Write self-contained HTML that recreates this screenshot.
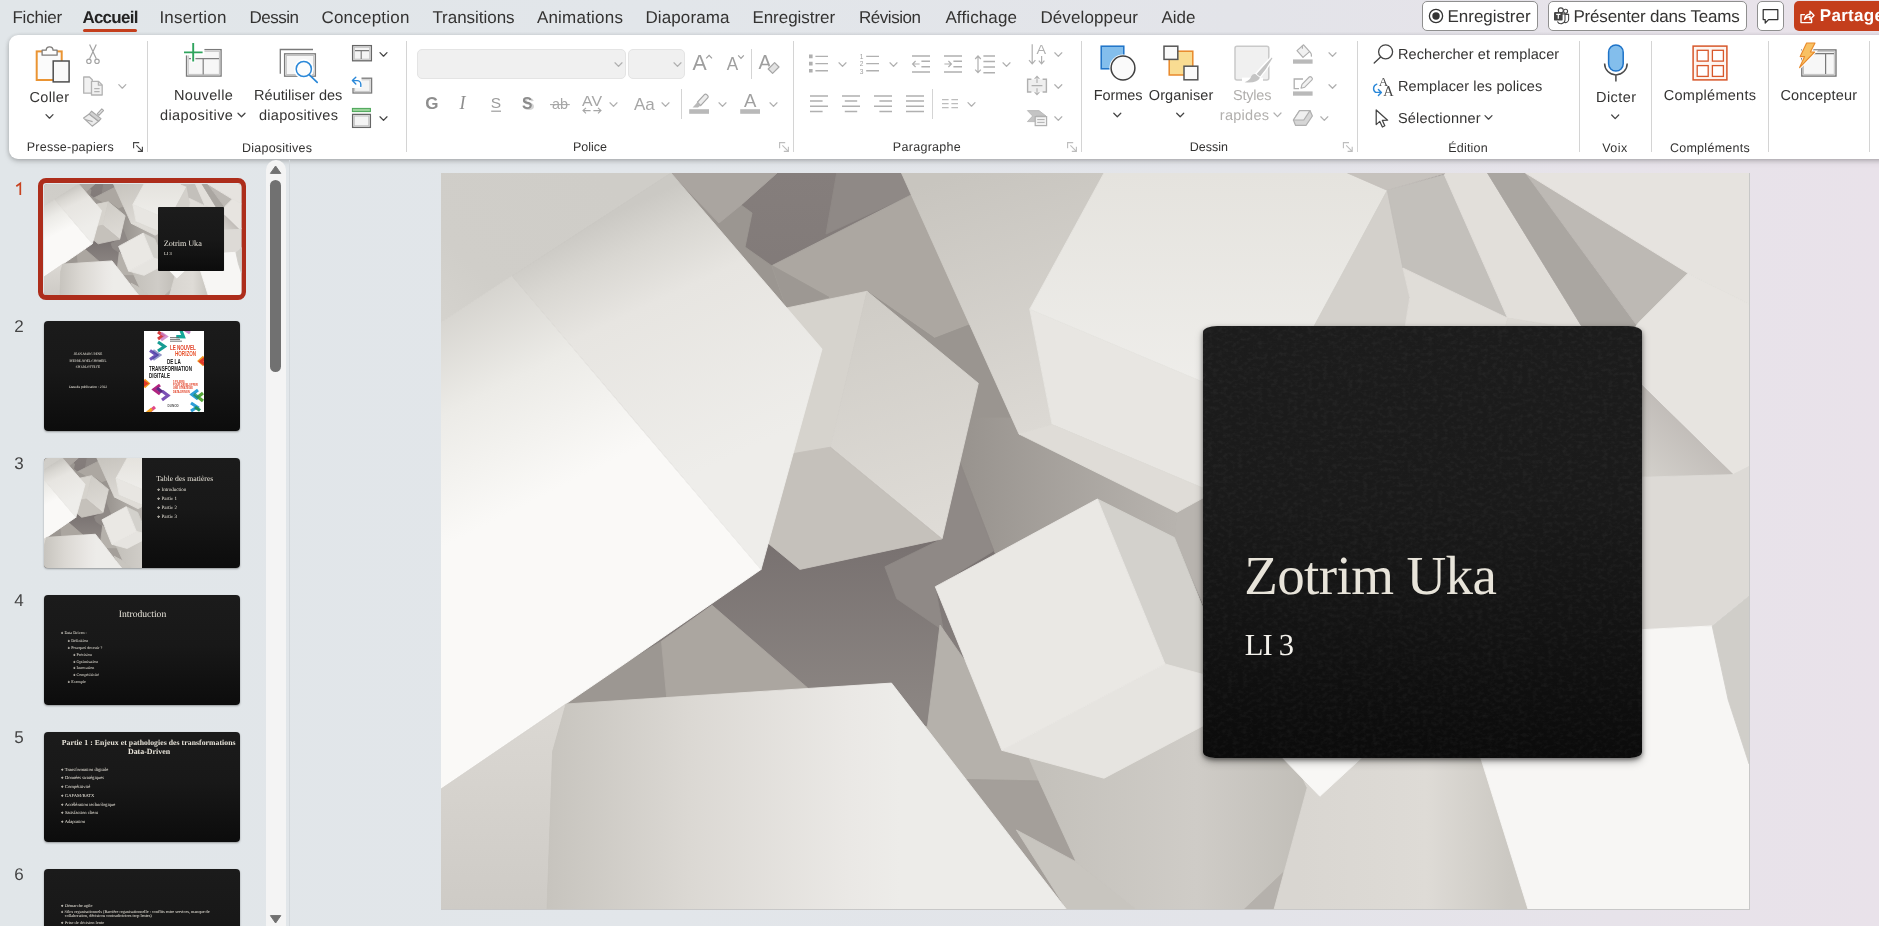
<!DOCTYPE html>
<html lang="fr"><head><meta charset="utf-8"><title>PowerPoint</title>
<style>
html,body{margin:0;padding:0}
body{width:1879px;height:926px;overflow:hidden;position:relative;font-family:"Liberation Sans",sans-serif;
background:linear-gradient(90deg,#e1e6e9 0%,#e2e6ea 35%,#e3e4e9 66%,#e7e3ea 86%,#e9e2ea 100%)}
.t{position:absolute;white-space:pre;text-rendering:geometricPrecision;font-family:"Liberation Sans",sans-serif}
.sf{font-family:"Liberation Serif",serif}
#ribbon{position:absolute;left:9px;top:35px;width:1890px;height:124px;background:#fff;border-radius:9px;box-shadow:0 1px 4px rgba(0,0,0,.22),0 3px 6px rgba(0,0,0,.10)}
.tabline{position:absolute;left:83px;top:29px;width:54px;height:3px;border-radius:2px;background:#c43e1c}
.btn{position:absolute;top:1px;height:30px;box-sizing:border-box;border:1px solid #8f8f8f;border-radius:5px;background:#fff}
#share{position:absolute;left:1794px;top:1px;width:100px;height:30px;border-radius:5px;background:#c43e1c}
.sep{position:absolute;top:41px;width:1px;height:111px;background:#d4d4d4}
.ssep{position:absolute;width:1px;background:#d4d4d4}
.combo{position:absolute;top:49px;height:30px;box-sizing:border-box;background:#f0f0f0;border:1px solid #e4e4e4;border-radius:5px}
#ov{position:absolute;left:0;top:0}
#labels{position:absolute;left:0;top:0;width:1879px;height:926px;will-change:transform}
.th{will-change:transform}
#track{position:absolute;left:266px;top:160px;width:20px;height:780px;background:#f4f4f4;border-radius:10px 10px 0 0}
#thumb{position:absolute;left:270px;top:180px;width:11px;height:192px;background:#717171;border-radius:6px}
#divider{position:absolute;left:289px;top:160px;width:1px;height:770px;background:#d3d8dc}
#slide{position:absolute;left:441px;top:173px;width:1309px;height:737px;background:#c8c8c8}
#card{overflow:hidden;position:absolute;left:1203px;top:326px;width:439px;height:432px;border-radius:14px 14px 12px 12px / 6px 6px 6px 6px;
background:linear-gradient(180deg,#1c1c1c 0%,#1a1a1a 40%,#131313 70%,#0b0b0b 100%);box-shadow:0 2px 4px rgba(0,0,0,.45),0 4px 9px rgba(0,0,0,.25)}
.th{position:absolute;left:44px;width:196px;height:110px;border-radius:4px;overflow:hidden;box-shadow:0 1px 2px rgba(0,0,0,.35)}
.thd{background:linear-gradient(180deg,#1b1b1b 0%,#181818 45%,#0c0c0c 100%)}
.tt{position:absolute;white-space:pre;text-rendering:geometricPrecision;font-family:"Liberation Serif",serif;color:#e8e4da;line-height:1}
#sel{position:absolute;left:38px;top:178px;width:208px;height:122px;box-sizing:border-box;border:5px solid #ad2d1b;border-radius:8px}
</style></head>
<body>
<!-- tab strip -->
<div class="tabline"></div>
<div class="btn" style="left:1422px;width:116px"></div>
<div class="btn" style="left:1548px;width:199px"></div>
<div class="btn" style="left:1757px;width:27px"></div>
<div id="share"></div>
<!-- ribbon -->
<div id="ribbon"></div>
<div class="sep" style="left:147px"></div>
<div class="sep" style="left:406px"></div>
<div class="sep" style="left:793px"></div>
<div class="sep" style="left:1081px"></div>
<div class="sep" style="left:1357px"></div>
<div class="sep" style="left:1579px"></div>
<div class="sep" style="left:1651px"></div>
<div class="sep" style="left:1768px"></div>
<div class="sep" style="left:1869px"></div>
<div class="ssep" style="left:751px;top:49px;height:30px"></div>
<div class="ssep" style="left:681px;top:89px;height:30px"></div>
<div class="ssep" style="left:932px;top:89px;height:30px"></div>
<div class="combo" style="left:417px;width:209px"></div>
<div class="combo" style="left:628px;width:57px"></div>
<!-- slide panel -->
<div id="track"></div><div id="thumb"></div><div id="divider"></div>
<div id="sel"></div>
<div class="th" style="top:183.5px;left:43.5px;width:197.5px;height:111px;border-radius:4px;box-shadow:none"><svg width="197.5" height="111" viewBox="441 173 1308 736" preserveAspectRatio="none" style="position:absolute;left:0px;top:0px;display:block"><use href="#cubes" x="441" y="173" width="1308" height="736"/></svg><div style="position:absolute;left:114px;top:22.6px;width:66px;height:64.8px;border-radius:1px;background:linear-gradient(180deg,#1c1c1c,#181818 50%,#0c0c0c)"></div><span class="tt" style="left:119.8px;top:56.3px;font-size:8.2px;letter-spacing:-.05px">Zotrim Uka</span><span class="tt" style="left:120.0px;top:68.0px;font-size:4.6px">LI 3</span></div>
<div class="th thd" style="top:321px"><div style="position:absolute;left:100px;top:10px;width:59.5px;height:81px;background:#fff;overflow:hidden">
<svg width="60" height="81" viewBox="0 0 60 81" style="position:absolute;left:0;top:0">
<g fill="none" stroke-width="3.2" stroke-linejoin="miter">
<path d="M14,1 l5,3.5 l-5,3.5" stroke="#d63b3b"/><path d="M17,2 l5,3.5 l-5,3.5" stroke="#c77bc5" opacity=".8"/>
<path d="M34,0 l6,4 l-6,4" stroke="#16a79a" transform="rotate(35 37 4)"/><path d="M41,-1 l5,3" stroke="#c487c8"/>
<path d="M14,11 l6.5,4.5 l-6.5,4.5" stroke="#169c93"/><path d="M6,19.5 l6.5,4.5 l-6.5,4.5" stroke="#6e55b8"/><path d="M9,19.5 l6.5,4.5 l-6.5,4.5" stroke="#3b3f9a" opacity=".55"/>
<path d="M60,26 l-4.5,4 l4.5,4" stroke="#f29a1f"/><path d="M61,27.5 l-4,3 l4,3" stroke="#e03a2a"/>
<path d="M0,49 l4,3.5 l-4,3.5" stroke="#f29a1f"/><path d="M-1,50.5 l3,2 l-3,2" stroke="#e03a2a"/>
<path d="M16,54 l-6,4.5 l6,4.5" stroke="#b0257f"/><path d="M18,60 l6,4.5 l-6,4.5" stroke="#7b52b5"/><path d="M13,57 l5,4" stroke="#5b2a86"/>
<path d="M54,59 l-6,4.5 l6,4.5" stroke="#2f9fd8"/><path d="M59,62 l-5,4 l5,4" stroke="#57a83a"/><path d="M50,63 l5,4" stroke="#1b8a6b" opacity=".8"/>
<path d="M47,72 l6,4 l-6,4" stroke="#2f9fd8"/><path d="M51,76 l5,3.5" stroke="#1e8f5e"/>
<path d="M6,80 l5,-4" stroke="#e04a8a"/><path d="M3,82 l5,-4" stroke="#f2a11f"/>
</g>
<path d="M26,6.6 h9 M26,8.4 h10 M26,10.2 h12" stroke="#666" stroke-width=".9"/>
</svg>
<span style="position:absolute;left:25.5px;top:12.6px;font:700 7.4px/7px 'Liberation Sans',sans-serif;color:#e2452c;white-space:pre;transform:scaleX(.62);transform-origin:0 0;letter-spacing:-.1px">LE NOUVEL</span>
<span style="position:absolute;left:30.5px;top:19.4px;font:700 7.4px/7px 'Liberation Sans',sans-serif;color:#e8552f;white-space:pre;transform:scaleX(.62);transform-origin:0 0">HORIZON</span>
<span style="position:absolute;left:22.6px;top:27.4px;font:700 7.6px/7px 'Liberation Sans',sans-serif;color:#161616;white-space:pre;transform:scaleX(.6);transform-origin:0 0">DE LA</span>
<span style="position:absolute;left:4.8px;top:34.2px;font:700 7.6px/7px 'Liberation Sans',sans-serif;color:#161616;white-space:pre;transform:scaleX(.6);transform-origin:0 0">TRANSFORMATION</span>
<span style="position:absolute;left:4.8px;top:41.2px;font:700 7.6px/7px 'Liberation Sans',sans-serif;color:#161616;white-space:pre;transform:scaleX(.6);transform-origin:0 0">DIGITALE</span>
<span style="position:absolute;left:29px;top:49.6px;font:700 3.1px/3.4px 'Liberation Sans',sans-serif;color:#e2452c;white-space:pre;transform:scaleX(.8);transform-origin:0 0">5 PILIERS<br>POUR DÉVELOPPER<br>UNE STRATÉGIE<br>DATA-DRIVEN</span>
<span style="position:absolute;left:23.4px;top:74.4px;font:700 3px/3px 'Liberation Sans',sans-serif;color:#555;white-space:pre;letter-spacing:.1px">DUNOD</span>
</div><span class="tt" style="left:14.0px;top:31.8px;font-size:3.3px;width:60px;text-align:center;color:#f4f0e6">JEAN-MARC RENE</span><span class="tt" style="left:14.0px;top:38.8px;font-size:3.3px;width:60px;text-align:center;color:#f4f0e6">PIERRE-NOËL CHOMEIL</span><span class="tt" style="left:14.0px;top:45.0px;font-size:3.3px;width:60px;text-align:center;color:#f4f0e6">CHARLOTTE FÉ</span><span class="tt" style="left:14.0px;top:65.0px;font-size:3.6px;width:60px;text-align:center;color:#f4f0e6">Date de publication : 2022</span></div>
<div class="th thd" style="top:458px"><svg width="98" height="110" viewBox="548 173 655 736" preserveAspectRatio="none" style="position:absolute;left:0px;top:0px;display:block"><use href="#cubes" x="441" y="173" width="1308" height="736"/></svg><span class="tt" style="left:112.2px;top:16.7px;font-size:7.7px">Table des matières</span><span class="tt" style="left:113.0px;top:29.6px;font-size:5.0px"><span style="font-size:.72em">❖</span> Introduction</span><span class="tt" style="left:113.0px;top:38.6px;font-size:5.0px"><span style="font-size:.72em">❖</span> Partie 1</span><span class="tt" style="left:113.0px;top:47.6px;font-size:5.0px"><span style="font-size:.72em">❖</span> Partie 2</span><span class="tt" style="left:113.0px;top:56.6px;font-size:5.0px"><span style="font-size:.72em">❖</span> Partie 3</span></div>
<div class="th thd" style="top:595px"><span class="tt" style="left:0.0px;top:14.8px;font-size:9.6px;width:197px;text-align:center">Introduction</span><span class="tt" style="left:16.8px;top:36.2px;font-size:4.1px"><span style="font-size:.72em">❖</span> Data Driven :</span><span class="tt" style="left:23.5px;top:44.1px;font-size:4.1px"><span style="font-size:.72em">❖</span> Définition</span><span class="tt" style="left:23.5px;top:50.7px;font-size:4.1px"><span style="font-size:.72em">❖</span> Pourquoi devenir ?</span><span class="tt" style="left:28.9px;top:57.9px;font-size:4.1px"><span style="font-size:.72em">❖</span> Précision</span><span class="tt" style="left:28.9px;top:65.0px;font-size:4.1px"><span style="font-size:.72em">❖</span> Optimisation</span><span class="tt" style="left:28.9px;top:71.2px;font-size:4.1px"><span style="font-size:.72em">❖</span> Innovation</span><span class="tt" style="left:28.9px;top:78.3px;font-size:4.1px"><span style="font-size:.72em">❖</span> Compétitivité</span><span class="tt" style="left:23.5px;top:85.0px;font-size:4.1px"><span style="font-size:.72em">❖</span> Exemple</span></div>
<div class="th thd" style="top:732px"><span class="tt" style="left:17.8px;top:6.7px;font-size:7.7px;font-weight:700;letter-spacing:.07px">Partie 1 : Enjeux et pathologies des transformations</span><span class="tt" style="left:0.0px;top:16.2px;font-size:7.9px;width:210px;text-align:center;font-weight:700">Data-Driven</span><span class="tt" style="left:16.8px;top:36.0px;font-size:4.6px"><span style="font-size:.72em">❖</span> Transformation digitale</span><span class="tt" style="left:16.8px;top:44.3px;font-size:4.6px"><span style="font-size:.72em">❖</span> Données stratégiques</span><span class="tt" style="left:16.8px;top:53.2px;font-size:4.6px"><span style="font-size:.72em">❖</span> Compétitivité</span><span class="tt" style="left:16.8px;top:62.0px;font-size:4.6px"><span style="font-size:.72em">❖</span> GAFAM/BATX</span><span class="tt" style="left:16.8px;top:70.8px;font-size:4.6px"><span style="font-size:.72em">❖</span> Accélération technologique</span><span class="tt" style="left:16.8px;top:79.1px;font-size:4.6px"><span style="font-size:.72em">❖</span> Satisfaction client</span><span class="tt" style="left:16.8px;top:87.8px;font-size:4.6px"><span style="font-size:.72em">❖</span> Adaptation</span></div>
<div class="th thd" style="top:869px"><span class="tt" style="left:16.8px;top:34.5px;font-size:4.4px"><span style="font-size:.72em">❖</span> Démarche agile</span><span class="tt" style="left:16.8px;top:41.2px;font-size:4.25px"><span style="font-size:.72em">❖</span> Silos organisationnels (Barrière organisationnelle : conflits entre services, manque de</span><span class="tt" style="left:20.8px;top:45.2px;font-size:4.25px">collaboration, décisions contradictoires trop lentes)</span><span class="tt" style="left:16.8px;top:51.9px;font-size:4.4px"><span style="font-size:.72em">❖</span> Prise de décision lente</span></div>
<!-- main slide -->
<div id="slide"><svg width="1308" height="736" viewBox="441 173 1308 736" style="position:absolute;left:0;top:0;display:block"><use href="#cubes" x="441" y="173" width="1308" height="736"/></svg></div>
<div id="card"><svg width="439" height="432" style="position:absolute;left:0;top:0;border-radius:14px 14px 12px 12px / 6px 6px 6px 6px"><filter id="lth" x="0" y="0" width="100%" height="100%"><feTurbulence type="fractalNoise" baseFrequency=".2 .26" numOctaves="3" seed="11"/><feColorMatrix type="matrix" values="0 0 0 0 1  0 0 0 0 1  0 0 0 0 1  1.6 0 0 0 -.62"/></filter><rect width="439" height="432" filter="url(#lth)" opacity=".05"/></svg></div>
<!-- icons overlay -->
<svg id="ov" width="1879" height="926" viewBox="0 0 1879 926" fill="none">
<symbol id="cubes" viewBox="441 173 1308 736" preserveAspectRatio="none">
<defs>
<linearGradient id="gBase" gradientUnits="userSpaceOnUse" x1="0" y1="173" x2="0" y2="909"><stop offset="0" stop-color="#857e7c"/><stop offset=".5" stop-color="#787170"/><stop offset=".72" stop-color="#8b8582"/><stop offset="1" stop-color="#8b8582"/></linearGradient>
<linearGradient id="gLeft" gradientUnits="userSpaceOnUse" x1="478" y1="290" x2="575" y2="480"><stop offset="0" stop-color="#d5d3ce"/><stop offset=".45" stop-color="#ecebe7"/><stop offset="1" stop-color="#faf9f7"/></linearGradient>
<linearGradient id="gTop" gradientUnits="userSpaceOnUse" x1="590" y1="225" x2="705" y2="470"><stop offset="0" stop-color="#cbc9c4"/><stop offset=".15" stop-color="#d9d7d2"/><stop offset=".36" stop-color="#e7e5e1"/><stop offset="1" stop-color="#eeedea"/></linearGradient>
<linearGradient id="gTL" gradientUnits="userSpaceOnUse" x1="600" y1="173" x2="441" y2="330"><stop offset="0" stop-color="#cfcdc8"/><stop offset=".7" stop-color="#d0cec9"/><stop offset="1" stop-color="#d5d3ce"/></linearGradient>
<linearGradient id="gMidR" gradientUnits="userSpaceOnUse" x1="867" y1="291" x2="942" y2="539"><stop offset="0" stop-color="#cfccc6"/><stop offset="1" stop-color="#dfdcd7"/></linearGradient>
<linearGradient id="gRL" gradientUnits="userSpaceOnUse" x1="960" y1="173" x2="1040" y2="430"><stop offset="0" stop-color="#c8c5bf"/><stop offset="1" stop-color="#dcd9d4"/></linearGradient>
<linearGradient id="gRF" gradientUnits="userSpaceOnUse" x1="1150" y1="173" x2="1150" y2="400"><stop offset="0" stop-color="#e5e3de"/><stop offset="1" stop-color="#efeeeb"/></linearGradient>
<linearGradient id="gBot" gradientUnits="userSpaceOnUse" x1="548" y1="0" x2="900" y2="0"><stop offset="0" stop-color="#c7c4be"/><stop offset=".4" stop-color="#dbd8d3"/><stop offset=".85" stop-color="#eae8e5"/><stop offset="1" stop-color="#edece9"/></linearGradient>
<linearGradient id="gBotL" gradientUnits="userSpaceOnUse" x1="0" y1="720" x2="0" y2="910"><stop offset="0" stop-color="#dad7d2"/><stop offset="1" stop-color="#cecbc6"/></linearGradient>
<linearGradient id="gK1" gradientUnits="userSpaceOnUse" x1="960" y1="0" x2="1180" y2="0"><stop offset="0" stop-color="#98938e"/><stop offset="1" stop-color="#b8b4af"/></linearGradient>
<linearGradient id="gG5" gradientUnits="userSpaceOnUse" x1="1040" y1="0" x2="1300" y2="0"><stop offset="0" stop-color="#c4c1bb"/><stop offset=".6" stop-color="#cfccc7"/><stop offset="1" stop-color="#c2bfb9"/></linearGradient>
<linearGradient id="gG6" gradientUnits="userSpaceOnUse" x1="1300" y1="0" x2="1510" y2="0"><stop offset="0" stop-color="#d9d6d1"/><stop offset=".6" stop-color="#dedbd6"/><stop offset="1" stop-color="#cbc8c2"/></linearGradient>
<linearGradient id="gH2" gradientUnits="userSpaceOnUse" x1="1700" y1="420" x2="1650" y2="475"><stop offset="0" stop-color="#beb9b5"/><stop offset="1" stop-color="#d2cfca"/></linearGradient>
</defs>
<rect x="441" y="173" width="1308" height="736" fill="url(#gBase)"/>
<!-- top dark facets -->
<polygon vector-effect="non-scaling-stroke" points="671,173 777,173 741,205 752,213 745,247 772,266 787.5,308 822,349" stroke="#9b9691" stroke-width=".9" stroke-linejoin="round" fill="#9b9691"/>
<polygon vector-effect="non-scaling-stroke" points="671,173 777,173 741,205 719,223" stroke="#aaa5a0" stroke-width=".9" stroke-linejoin="round" fill="#aaa5a0"/>
<polygon vector-effect="non-scaling-stroke" points="836.7,173 904,173 914,193.5 826,234" stroke="#8f8986" stroke-width=".9" stroke-linejoin="round" fill="#8f8986"/>
<!-- pyramid cube -->
<polygon vector-effect="non-scaling-stroke" points="772,265.6 914,193.5 973,323.5 934.6,338.3 867,291.3 786.5,308" stroke="#aca7a1" stroke-width=".9" stroke-linejoin="round" fill="#aca7a1"/>
<polygon vector-effect="non-scaling-stroke" points="772,265.6 829,297.3 786.5,308" stroke="#9d9893" stroke-width=".9" stroke-linejoin="round" fill="#9d9893"/>
<polygon vector-effect="non-scaling-stroke" points="867,291.3 934.6,338.3 973,323.5 1013,418 969.9,418 978.3,383.3" stroke="#9a9590" stroke-width=".9" stroke-linejoin="round" fill="#9a9590"/>
<!-- K regions -->
<polygon vector-effect="non-scaling-stroke" points="969.9,418 1013,418 1022,432 1177,512.3 1174.4,537.6 1100,506 997,558 959.3,460.5" stroke="url(#gK1)" stroke-width=".9" stroke-linejoin="round" fill="url(#gK1)"/>
<polygon vector-effect="non-scaling-stroke" points="942,538.9 969.9,418 959.3,460.5 993.8,550.8 935.3,586.7 943.3,630.5 896.8,598.7 884.9,566.8" stroke="#8f8986" stroke-width=".9" stroke-linejoin="round" fill="#8f8986"/>
<polygon vector-effect="non-scaling-stroke" points="1177,512.3 1203,498 1203,604 1174.4,537.6" stroke="#b8b4af" stroke-width=".9" stroke-linejoin="round" fill="#b8b4af"/>
<!-- middle cube -->
<polygon vector-effect="non-scaling-stroke" points="786.5,308 867,291.3 830.4,447.2 785,462" stroke="#d6d3cd" stroke-width=".9" stroke-linejoin="round" fill="#d6d3cd"/>
<polygon vector-effect="non-scaling-stroke" points="867,291.3 978.3,383.3 942,538.9 830.4,447.2" stroke="url(#gMidR)" stroke-width=".9" stroke-linejoin="round" fill="url(#gMidR)"/>
<polygon vector-effect="non-scaling-stroke" points="830.4,447.2 942,538.9 799.9,569.4 757,534 785,455" stroke="#c5c1bb" stroke-width=".9" stroke-linejoin="round" fill="#c5c1bb"/>
<!-- lower-left dark facets -->
<polygon vector-effect="non-scaling-stroke" points="624.3,664 661.5,641.2 666.8,698.5 566,704" stroke="#9c9792" stroke-width=".9" stroke-linejoin="round" fill="#9c9792"/>
<polygon vector-effect="non-scaling-stroke" points="661.5,641.2 712,605.3 807.6,687.9 666.8,698.5" stroke="#aba6a0" stroke-width=".9" stroke-linejoin="round" fill="#aba6a0"/>
<!-- big cube -->
<polygon vector-effect="non-scaling-stroke" points="441,173 671,173 512,276 441,322.5" stroke="url(#gTL)" stroke-width=".9" stroke-linejoin="round" fill="url(#gTL)"/>
<polygon vector-effect="non-scaling-stroke" points="441,322.5 512,276 632,418 761,569.5 624.3,664 441,789" stroke="url(#gLeft)" stroke-width=".9" stroke-linejoin="round" fill="url(#gLeft)"/>
<polygon vector-effect="non-scaling-stroke" points="671,173 822,349 761,569.5 512,276" stroke="url(#gTop)" stroke-width=".9" stroke-linejoin="round" fill="url(#gTop)"/>
<!-- right cube -->
<polygon vector-effect="non-scaling-stroke" points="901.5,173 1104,173 1029.8,309.2 1052.2,424.6 1019,434" stroke="url(#gRL)" stroke-width=".9" stroke-linejoin="round" fill="url(#gRL)"/>
<polygon vector-effect="non-scaling-stroke" points="1104,173 1347.6,173 1387.3,190.3 1300,353 1210,385 1029.8,309.2" stroke="url(#gRF)" stroke-width=".9" stroke-linejoin="round" fill="url(#gRF)"/>
<polygon vector-effect="non-scaling-stroke" points="1029.8,309.2 1210,385 1210,491 1052.2,424.6" stroke="#e8e6e2" stroke-width=".9" stroke-linejoin="round" fill="#e8e6e2"/>
<polygon vector-effect="non-scaling-stroke" points="1052.2,424.6 1210,491 1203,498 1177,512.3 1019,434" stroke="#dfdcd7" stroke-width=".9" stroke-linejoin="round" fill="#dfdcd7"/>
<!-- top right facets -->
<polygon vector-effect="non-scaling-stroke" points="1347.6,173 1446,173 1387.3,190.3" stroke="#c6c2bd" stroke-width=".9" stroke-linejoin="round" fill="#c6c2bd"/>
<polygon vector-effect="non-scaling-stroke" points="1387.3,190.3 1402.9,268 1409.8,297.4 1404.6,330 1312,330" stroke="#d3d0cb" stroke-width=".9" stroke-linejoin="round" fill="#d3d0cb"/>
<polygon vector-effect="non-scaling-stroke" points="1387.3,190.3 1444.3,174.7 1507.6,318.1 1402.9,268" stroke="#c3c0bb" stroke-width=".9" stroke-linejoin="round" fill="#c3c0bb"/>
<polygon vector-effect="non-scaling-stroke" points="1402.9,268 1507.6,318.1 1505,330 1404.6,330 1409.8,297.4" stroke="#e0ddd8" stroke-width=".9" stroke-linejoin="round" fill="#e0ddd8"/>
<polygon vector-effect="non-scaling-stroke" points="1446,173 1487.5,173 1584,330 1507.6,318.1 1444.3,174.7" stroke="#e2dfda" stroke-width=".9" stroke-linejoin="round" fill="#e2dfda"/>
<polygon vector-effect="non-scaling-stroke" points="1505,330 1507.6,318.1 1584,330" stroke="#dcd9d4" stroke-width=".9" stroke-linejoin="round" fill="#dcd9d4"/>
<polygon vector-effect="non-scaling-stroke" points="1487.5,173 1525.5,173 1640,330 1584,330" stroke="#aaa6a1" stroke-width=".9" stroke-linejoin="round" fill="#aaa6a1"/>
<polygon vector-effect="non-scaling-stroke" points="1525.5,173 1688,273.2 1639.6,321.6 1638,327" stroke="#bdb9b4" stroke-width=".9" stroke-linejoin="round" fill="#bdb9b4"/>
<polygon vector-effect="non-scaling-stroke" points="1525.5,173 1749,173 1749,304.3 1688,273.2" stroke="#e6e3df" stroke-width=".9" stroke-linejoin="round" fill="#e6e3df"/>
<polygon vector-effect="non-scaling-stroke" points="1688,273.2 1749,304.3 1749,470 1733,474.6 1636,379.5 1636,326 1639.6,321.6" stroke="#e7e4e0" stroke-width=".9" stroke-linejoin="round" fill="#e7e4e0"/>
<polygon vector-effect="non-scaling-stroke" points="1636,379.5 1733,474.6 1636,477.3" stroke="url(#gH2)" stroke-width=".9" stroke-linejoin="round" fill="url(#gH2)"/>
<polygon vector-effect="non-scaling-stroke" points="1636,477.3 1733,474.6 1749,466.5 1749,596 1712.2,625.9 1636,630" stroke="#dddad6" stroke-width=".9" stroke-linejoin="round" fill="#dddad6"/>
<!-- bottom middle gray -->
<polygon vector-effect="non-scaling-stroke" points="940,625 967.2,664 1001.8,750.3 1028.3,756.4 1039,780.9 967.2,779.6 940,779 905,726.4 927.4,726.4 935.3,664" stroke="#b5b1ab" stroke-width=".9" stroke-linejoin="round" fill="#b5b1ab"/>
<polygon vector-effect="non-scaling-stroke" points="940,779 1039,780.9 1076.2,861.9 1137.3,910 1040,910" stroke="#a49f9a" stroke-width=".9" stroke-linejoin="round" fill="#a49f9a"/>
<polygon vector-effect="non-scaling-stroke" points="1016.4,830 1076.2,861.9 1137.3,910 1067,910" stroke="#c8c5bf" stroke-width=".9" stroke-linejoin="round" fill="#c8c5bf"/>
<polygon vector-effect="non-scaling-stroke" points="1028.3,756.4 1104,777 1210,720.5 1310,757 1307.2,787.8 1273.9,910 1137.3,910 1076.2,861.9 1039,780.9" stroke="url(#gG5)" stroke-width=".9" stroke-linejoin="round" fill="url(#gG5)"/>
<polygon vector-effect="non-scaling-stroke" points="1243.6,910 1283,872.6 1273.9,910" stroke="#b5b1ac" stroke-width=".9" stroke-linejoin="round" fill="#b5b1ac"/>
<polygon vector-effect="non-scaling-stroke" points="1290,750 1478.3,750 1528.3,910 1273.9,910 1307.2,787.8" stroke="url(#gG6)" stroke-width=".9" stroke-linejoin="round" fill="url(#gG6)"/>
<polygon vector-effect="non-scaling-stroke" points="1478.3,750 1528.3,910 1749,910 1749,596 1712.2,625.9 1636,630 1636,750" stroke="#f7f6f4" stroke-width=".9" stroke-linejoin="round" fill="#f7f6f4"/>
<polygon vector-effect="non-scaling-stroke" points="1712.2,625.9 1749,596 1749,763.7 1728.2,699.8" stroke="#d0cec9" stroke-width=".9" stroke-linejoin="round" fill="#d0cec9"/>
<polygon vector-effect="non-scaling-stroke" points="1275,750 1370,750 1319.9,796.3" stroke="#f8f7f5" stroke-width=".9" stroke-linejoin="round" fill="#f8f7f5"/>
<!-- bottom cube -->
<polygon vector-effect="non-scaling-stroke" points="441,789 566,704 552.6,751.7 547,910 441,910" stroke="url(#gBotL)" stroke-width=".9" stroke-linejoin="round" fill="url(#gBotL)"/>
<polygon vector-effect="non-scaling-stroke" points="566,704 891.5,683.1 1067,910 547,910 552.6,751.7" stroke="url(#gBot)" stroke-width=".9" stroke-linejoin="round" fill="url(#gBot)"/>
<!-- small front cube -->
<polygon vector-effect="non-scaling-stroke" points="1097.4,499 1174.4,537.6 1242,703 1165,664" stroke="#d3d1cc" stroke-width=".9" stroke-linejoin="round" fill="#d3d1cc"/>
<polygon vector-effect="non-scaling-stroke" points="1001.8,750.3 1165,664 1267,692 1104,778.2" stroke="#e6e4e0" stroke-width=".9" stroke-linejoin="round" fill="#e6e4e0"/>
<polygon vector-effect="non-scaling-stroke" points="1097.4,499 935.3,586.7 1001.8,750.3 1165,664" stroke="#eae8e4" stroke-width=".9" stroke-linejoin="round" fill="#eae8e4"/>
</symbol>

<path d="M46.0,114.6 l3.50,3.6 l3.50,-3.6" stroke="#444444" stroke-width="1.25" fill="none" stroke-linecap="round" stroke-linejoin="round"/>
<path d="M118.8,84.6 l3.50,3.6 l3.50,-3.6" stroke="#b0b0b0" stroke-width="1.25" fill="none" stroke-linecap="round" stroke-linejoin="round"/>
<path d="M238.0,113.2 l3.50,3.6 l3.50,-3.6" stroke="#444444" stroke-width="1.25" fill="none" stroke-linecap="round" stroke-linejoin="round"/>
<path d="M380.0,52.6 l3.50,3.6 l3.50,-3.6" stroke="#444444" stroke-width="1.25" fill="none" stroke-linecap="round" stroke-linejoin="round"/>
<path d="M380.0,116.8 l3.50,3.6 l3.50,-3.6" stroke="#444444" stroke-width="1.25" fill="none" stroke-linecap="round" stroke-linejoin="round"/>
<path d="M615.0,62.8 l3.50,3.6 l3.50,-3.6" stroke="#b0b0b0" stroke-width="1.25" fill="none" stroke-linecap="round" stroke-linejoin="round"/>
<path d="M674.0,62.8 l3.50,3.6 l3.50,-3.6" stroke="#b0b0b0" stroke-width="1.25" fill="none" stroke-linecap="round" stroke-linejoin="round"/>
<path d="M610.0,102.8 l3.50,3.6 l3.50,-3.6" stroke="#b0b0b0" stroke-width="1.25" fill="none" stroke-linecap="round" stroke-linejoin="round"/>
<path d="M662.0,102.8 l3.50,3.6 l3.50,-3.6" stroke="#b0b0b0" stroke-width="1.25" fill="none" stroke-linecap="round" stroke-linejoin="round"/>
<path d="M719.0,102.8 l3.50,3.6 l3.50,-3.6" stroke="#b0b0b0" stroke-width="1.25" fill="none" stroke-linecap="round" stroke-linejoin="round"/>
<path d="M770.0,102.8 l3.50,3.6 l3.50,-3.6" stroke="#b0b0b0" stroke-width="1.25" fill="none" stroke-linecap="round" stroke-linejoin="round"/>
<path d="M839.0,62.8 l3.50,3.6 l3.50,-3.6" stroke="#b0b0b0" stroke-width="1.25" fill="none" stroke-linecap="round" stroke-linejoin="round"/>
<path d="M890.0,62.8 l3.50,3.6 l3.50,-3.6" stroke="#b0b0b0" stroke-width="1.25" fill="none" stroke-linecap="round" stroke-linejoin="round"/>
<path d="M1003.0,62.8 l3.50,3.6 l3.50,-3.6" stroke="#b0b0b0" stroke-width="1.25" fill="none" stroke-linecap="round" stroke-linejoin="round"/>
<path d="M1054.8,52.8 l3.50,3.6 l3.50,-3.6" stroke="#b0b0b0" stroke-width="1.25" fill="none" stroke-linecap="round" stroke-linejoin="round"/>
<path d="M1054.8,84.7 l3.50,3.6 l3.50,-3.6" stroke="#b0b0b0" stroke-width="1.25" fill="none" stroke-linecap="round" stroke-linejoin="round"/>
<path d="M1054.8,116.8 l3.50,3.6 l3.50,-3.6" stroke="#b0b0b0" stroke-width="1.25" fill="none" stroke-linecap="round" stroke-linejoin="round"/>
<path d="M968.0,102.6 l3.50,3.6 l3.50,-3.6" stroke="#b0b0b0" stroke-width="1.25" fill="none" stroke-linecap="round" stroke-linejoin="round"/>
<path d="M1113.8,113.2 l3.50,3.6 l3.50,-3.6" stroke="#444444" stroke-width="1.25" fill="none" stroke-linecap="round" stroke-linejoin="round"/>
<path d="M1176.7,113.2 l3.50,3.6 l3.50,-3.6" stroke="#444444" stroke-width="1.25" fill="none" stroke-linecap="round" stroke-linejoin="round"/>
<path d="M1274.0,113.0 l3.50,3.6 l3.50,-3.6" stroke="#b0b0b0" stroke-width="1.25" fill="none" stroke-linecap="round" stroke-linejoin="round"/>
<path d="M1329.0,52.8 l3.50,3.6 l3.50,-3.6" stroke="#b0b0b0" stroke-width="1.25" fill="none" stroke-linecap="round" stroke-linejoin="round"/>
<path d="M1329.0,84.7 l3.50,3.6 l3.50,-3.6" stroke="#b0b0b0" stroke-width="1.25" fill="none" stroke-linecap="round" stroke-linejoin="round"/>
<path d="M1320.8,116.8 l3.50,3.6 l3.50,-3.6" stroke="#b0b0b0" stroke-width="1.25" fill="none" stroke-linecap="round" stroke-linejoin="round"/>
<path d="M1485.0,115.6 l3.50,3.6 l3.50,-3.6" stroke="#444444" stroke-width="1.25" fill="none" stroke-linecap="round" stroke-linejoin="round"/>
<path d="M1611.7,115.0 l3.50,3.6 l3.50,-3.6" stroke="#444444" stroke-width="1.25" fill="none" stroke-linecap="round" stroke-linejoin="round"/>
<path d="M133.6,148.2 V142.6 H139.2 M136.4,145.4 L142.4,151.4 M142.4,146.8 V151.4 H137.8" stroke="#444444" stroke-width="1.1" fill="none"/>
<path d="M779.6,148.2 V142.6 H785.2 M782.4,145.4 L788.4,151.4 M788.4,146.8 V151.4 H783.8" stroke="#bdbdbd" stroke-width="1.1" fill="none"/>
<path d="M1067.6,148.2 V142.6 H1073.2 M1070.4,145.4 L1076.4,151.4 M1076.4,146.8 V151.4 H1071.8" stroke="#bdbdbd" stroke-width="1.1" fill="none"/>
<path d="M1343.3999999999999,148.2 V142.6 H1349.0 M1346.2,145.4 L1352.2,151.4 M1352.2,146.8 V151.4 H1347.6" stroke="#bdbdbd" stroke-width="1.1" fill="none"/>
<g id="i-paste"><rect x="36.7" y="51.4" width="25" height="28.6" fill="#fbfbfb" stroke="#ea9433" stroke-width="2"/>
<path d="M42.1,55.2 V50.2 H46.2 a3.4,3.4 0 0 1 6.8,0 H57.1 V55.2 Z" fill="#fdfdfd" stroke="#7d7b79" stroke-width="1.3" stroke-linejoin="round"/>
<rect x="53.2" y="61" width="15.9" height="20.9" fill="#fafafa" stroke="#4f4f4f" stroke-width="1.5"/></g>
<g id="i-cut" stroke="#a3a3a3" stroke-width="1.2" fill="none"><path d="M89.6,44.4 L96.3,58.8 M96.3,44.4 L89.6,58.8"/><circle cx="88.9" cy="61.3" r="2.2"/><circle cx="97" cy="61.3" r="2.2"/></g>
<g id="i-copy" stroke="#b3b3b3" stroke-width="1.3" fill="#f1f1f1" stroke-linejoin="round"><path d="M83.7,77 H89.5 L92.3,79.8 V93.2 H83.7 Z"/><path d="M91.5,81.4 H98.6 L102.2,85 V95 H91.5 Z"/><path d="M98.4,81.6 V85.2 H102" fill="none"/><path d="M94.2,88.6 H99.6 M94.2,91.6 H99.6" fill="none"/></g>
<g id="i-painter" stroke="#a8a8a8" stroke-width="1.1" stroke-linejoin="round"><path d="M97.2,113.8 L101.8,108.8 L103.5,110.5 L98.9,115.4 Z" fill="#e4e4e4"/><path d="M89.2,114 L98.6,121.2 L92.2,126.2 L83.6,118 Z" fill="#ececec"/><path d="M91.6,111.2 L101,118.6 L98.6,121.3 L89.2,114 Z" fill="#d2d2d2"/><path d="M85.8,119.8 L92.6,121.6" fill="none"/></g>
<g id="i-newslide"><rect x="186.5" y="49.6" width="34.6" height="26.5" fill="#f7f7f7" stroke="#7a7a7a" stroke-width="1.3"/>
<rect x="188.2" y="51.3" width="31.2" height="23.1" fill="none" stroke="#c2c2c2" stroke-width="1"/>
<path d="M189,58.6 H219 M203.2,58.6 V74.6" stroke="#808080" stroke-width="1.2"/>
<rect x="183" y="42" width="21.4" height="13.4" fill="#fff"/><path d="M183.2,52.4 H203.4 M193.2,42.4 V62.6" stroke="#fff" stroke-width="4.4"/>
<path d="M184,52.4 H202.6 M193.2,43 V61.4" stroke="#2fa45d" stroke-width="1.9"/></g>
<g id="i-reuse"><path d="M280.3,73.8 V49.5 H313" stroke="#7a7a7a" stroke-width="1.3" fill="none"/>
<rect x="284.6" y="53.8" width="30.8" height="22.4" fill="#f7f7f7" stroke="#7a7a7a" stroke-width="1.3"/><rect x="286.3" y="55.5" width="27.4" height="19" fill="none" stroke="#c2c2c2" stroke-width="1"/>
<circle cx="303.8" cy="69" r="8.2" fill="#fdfdfd" stroke="#fff" stroke-width="3.6"/><circle cx="303.8" cy="69" r="7.6" fill="#fdfdfd" stroke="#2b88d8" stroke-width="1.5"/>
<path d="M309.4,74.8 L317.2,82.4" stroke="#2b88d8" stroke-width="1.7" stroke-linecap="round"/></g>
<g id="i-layout"><rect x="352.6" y="45.6" width="18.8" height="15.2" fill="#f4f4f4" stroke="#666" stroke-width="1.3"/><rect x="354.2" y="47.2" width="15.6" height="12" fill="none" stroke="#bdbdbd" stroke-width="1"/><path d="M355,50.6 H369 M361.2,50.6 V59" stroke="#7a7a7a" stroke-width="1.1"/></g>
<g id="i-reset"><rect x="353" y="78.2" width="18.6" height="14.8" fill="#f4f4f4" stroke="#7a7a7a" stroke-width="1.3"/><rect x="354.6" y="79.8" width="15.4" height="11.6" fill="none" stroke="#c6c6c6" stroke-width="1"/>
<path d="M350.5,76 H361.5 V88 H350.5 Z" fill="#fff"/><path d="M352.6,80.6 H357.2 a3.6,3.6 0 0 1 3.6,3.6 V86.4 M355.8,77.2 L352.4,80.6 L355.8,84" stroke="#2b88d8" stroke-width="1.4" fill="none" stroke-linecap="round" stroke-linejoin="round"/></g>
<g id="i-section"><rect x="352.4" y="108.4" width="18" height="3.2" fill="#9ad29a" stroke="#4aa657" stroke-width="1"/><rect x="352.6" y="114.4" width="17.8" height="13" fill="#f4f4f4" stroke="#666" stroke-width="1.3"/><rect x="354.2" y="116" width="14.6" height="9.8" fill="none" stroke="#bdbdbd" stroke-width="1"/></g>
<text x="425.2" y="108.7" font-family="Liberation Sans, sans-serif" font-size="17" font-weight="700" fill="#8e8e8e">G</text>
<text x="459.6" y="108.9" font-family="Liberation Serif, serif" font-size="18" font-style="italic" fill="#8e8e8e">I</text>
<text x="490.8" y="107.6" font-family="Liberation Sans, sans-serif" font-size="15.5" fill="#9c9c9c">S</text><path d="M491.2,111.2 H501" stroke="#9c9c9c" stroke-width="1.2"/>
<text x="523.2" y="109.6" font-family="Liberation Sans, sans-serif" font-size="17" font-weight="700" fill="#d4d4d4">S</text><text x="522" y="108.6" font-family="Liberation Sans, sans-serif" font-size="17" font-weight="700" fill="#8c8c8c" textLength="10.4" lengthAdjust="spacingAndGlyphs">S</text>
<text x="552" y="109" font-family="Liberation Sans, sans-serif" font-size="15" fill="#a6a6a6" textLength="16" lengthAdjust="spacingAndGlyphs">ab</text><path d="M550,104.6 H569.8" stroke="#a6a6a6" stroke-width="1.1"/>
<text x="582" y="105.6" font-family="Liberation Sans, sans-serif" font-size="15.5" fill="#a6a6a6" textLength="20" lengthAdjust="spacingAndGlyphs">AV</text><path d="M583,110.6 H590.6 M593.4,110.6 H601 M586,107.8 L583,110.6 L586,113.4 M598,107.8 L601,110.6 L598,113.4" stroke="#a6a6a6" stroke-width="1.1" fill="none"/>
<text x="634" y="109.8" font-family="Liberation Sans, sans-serif" font-size="17" fill="#a6a6a6" textLength="20.6" lengthAdjust="spacing">Aa</text>
<text x="692.4" y="70" font-family="Liberation Sans, sans-serif" font-size="21.5" fill="#9e9e9e" textLength="14.2" lengthAdjust="spacingAndGlyphs">A</text><path d="M706.2,58.4 l2.9,-3 l2.9,3" stroke="#9e9e9e" stroke-width="1.2" fill="none"/>
<text x="726.8" y="70" font-family="Liberation Sans, sans-serif" font-size="18" fill="#9e9e9e" textLength="11.4" lengthAdjust="spacingAndGlyphs">A</text><path d="M738.2,55.4 l2.8,2.9 l2.8,-2.9" stroke="#9e9e9e" stroke-width="1.2" fill="none"/>
<text x="758.6" y="69.4" font-family="Liberation Sans, sans-serif" font-size="21" fill="#9e9e9e" textLength="13" lengthAdjust="spacingAndGlyphs">A</text><path d="M774.6,62.6 L779,67 L772.6,73.4 L768.2,69 Z" fill="#e9e9e9" stroke="#fff" stroke-width="2.4"/><path d="M774.6,62.6 L779,67 L772.6,73.4 L768.2,69 Z" fill="#e2e2e2" stroke="#a6a6a6" stroke-width="1.2" stroke-linejoin="round"/>
<g id="i-highlight"><rect x="689.2" y="109.2" width="19.8" height="4.6" fill="#b9b9b9"/><path d="M697.4,102.2 L704.4,94.6 a1.6,1.6 0 0 1 2.3,0 l1,1 a1.6,1.6 0 0 1 0,2.3 L700.6,105.6 Z" fill="#ececec" stroke="#a6a6a6" stroke-width="1.2" stroke-linejoin="round"/><path d="M697.4,102.2 L700.6,105.6 L698,107.4 H692.6 Z" fill="#b9b9b9"/></g>
<rect x="740.2" y="109.2" width="19.8" height="4.6" fill="#b9b9b9"/><text x="744" y="106.8" font-family="Liberation Sans, sans-serif" font-size="18" fill="#a0a0a0" textLength="12.4" lengthAdjust="spacingAndGlyphs">A</text>
<path d="M809,54.6 h3.6 v3.6 h-3.6Z M809,61.8 h3.6 v3.6 h-3.6Z M809,69 h3.6 v3.6 h-3.6Z" fill="#b0b0b0"/>
<path d="M815.4,56.4 H828 M815.4,63.6 H828 M815.4,70.8 H828" stroke="#b0b0b0" stroke-width="1.4" fill="none"/>
<text x="859.8" y="58.6" font-family="Liberation Sans, sans-serif" font-size="6.6" fill="#a0a0a0">1</text><text x="859.8" y="66.4" font-family="Liberation Sans, sans-serif" font-size="6.6" fill="#a0a0a0">2</text><text x="859.8" y="74.2" font-family="Liberation Sans, sans-serif" font-size="6.6" fill="#a0a0a0">3</text>
<path d="M866.2,56.4 H879 M866.2,63.6 H879 M866.2,70.8 H879" stroke="#b0b0b0" stroke-width="1.4" fill="none"/>
<path d="M912,55.9 H930 M921.4,61.3 H930 M921.4,66.7 H930 M912,72.1 H930" stroke="#b0b0b0" stroke-width="1.5" fill="none"/>
<path d="M919.6,64 H912.8 M915.6,61 L912.6,64 L915.6,67" stroke="#b0b0b0" stroke-width="1.2" fill="none"/>
<path d="M944,55.9 H962 M953.4,61.3 H962 M953.4,66.7 H962 M944,72.1 H962" stroke="#b0b0b0" stroke-width="1.5" fill="none"/>
<path d="M944.4,64 H951.2 M948.4,61 L951.4,64 L948.4,67" stroke="#b0b0b0" stroke-width="1.2" fill="none"/>
<path d="M983.4,55.9 H995 M983.4,61.5 H995 M983.4,67.1 H995 M983.4,72.7 H995" stroke="#b0b0b0" stroke-width="1.5" fill="none"/>
<path d="M978,56 V72.6 M975.2,59 L978,56 L980.8,59 M975.2,69.6 L978,72.6 L980.8,69.6" stroke="#b0b0b0" stroke-width="1.2" fill="none"/>
<path d="M1032.2,44.2 V63.6 M1029,60.2 L1032.2,63.8 L1035.4,60.2 M1041.6,56 V63.6 M1038.8,60.6 L1041.6,63.8 L1044.4,60.6" stroke="#b0b0b0" stroke-width="1.2" fill="none"/><text x="1036.6" y="53.6" font-family="Liberation Sans, sans-serif" font-size="12" fill="#b0b0b0" textLength="9.6" lengthAdjust="spacingAndGlyphs">A</text>
<rect x="1028" y="79.4" width="18" height="12.4" fill="#efefef"/><path d="M1031.4,79.2 H1027.6 V92 H1031.4 M1042.6,79.2 H1046.4 V92 H1042.6" stroke="#b0b0b0" stroke-width="1.4" fill="none"/><path d="M1031.6,85.6 H1042.4 M1037,76.4 V83 M1034.6,78.8 L1037,76.2 L1039.4,78.8 M1037,88.2 V94.6 M1034.6,92.2 L1037,94.8 L1039.4,92.2" stroke="#b0b0b0" stroke-width="1.1" fill="none"/>
<path d="M1027.4,110.6 H1039 L1046,116 H1036 V121.6 H1027.4 L1032.6,116 Z" fill="#c4c4c4" stroke="#b4b4b4" stroke-width=".8" stroke-linejoin="round"/><rect x="1035.2" y="116.6" width="11.4" height="9" fill="#f2f2f2" stroke="#b0b0b0" stroke-width="1.2"/><path d="M1037.2,119.6 H1044.6 M1037.2,122.4 H1044.6" stroke="#b0b0b0" stroke-width="1"/>
<path d="M810,95.9 H828 M810,101.1 H822.6 M810,106.3 H828 M810,111.5 H822.6" stroke="#b0b0b0" stroke-width="1.5" fill="none"/>
<path d="M842,95.9 H860 M844.8,101.1 H857.2 M842,106.3 H860 M844.8,111.5 H857.2" stroke="#b0b0b0" stroke-width="1.5" fill="none"/>
<path d="M874,95.9 H892 M879.4,101.1 H892 M874,106.3 H892 M879.4,111.5 H892" stroke="#b0b0b0" stroke-width="1.5" fill="none"/>
<path d="M906,95.9 H924 M906,101.1 H924 M906,106.3 H924 M906,111.5 H924" stroke="#b0b0b0" stroke-width="1.5" fill="none"/>
<path d="M942,99.6 H948.6 M942,103.6 H948.6 M942,107.6 H948.6 M951.4,99.6 H958 M951.4,103.6 H958 M951.4,107.6 H958" stroke="#bdbdbd" stroke-width="1.2" fill="none"/>
<g id="i-shapes"><rect x="1101.2" y="46.2" width="22.6" height="22.6" fill="#83beec" stroke="#1e73c8" stroke-width="1.5"/><circle cx="1123" cy="68" r="13.6" fill="#fff"/><circle cx="1123" cy="68" r="11.9" fill="#fafafa" stroke="#3f3f3f" stroke-width="1.5"/></g>
<g id="i-arrange"><rect x="1169.2" y="51.2" width="23.6" height="23.8" fill="#f9dc92" stroke="#e8892b" stroke-width="1.5"/><rect x="1164" y="46.2" width="13.8" height="13.2" fill="#fafafa" stroke="#555" stroke-width="1.5"/><rect x="1184" y="66.2" width="13.8" height="13.6" fill="#fafafa" stroke="#555" stroke-width="1.5"/></g>
<g id="i-qstyles"><rect x="1235" y="46.2" width="33.8" height="33.8" rx="2" fill="#f0f0f0" stroke="#c9c9c9" stroke-width="1.5"/><path d="M1242,84 H1263 V77.6 H1242 Z" fill="#fff"/><path d="M1273.4,57.8 Q1267.4,69 1260,77.6 L1255.6,74 Q1263.6,65 1271.6,56.6 Z" fill="#c4c4c4" stroke="#fff" stroke-width="1.4"/><path d="M1255.4,74 L1260,77.8 Q1257,83.6 1244.6,82.2 Q1250.6,79.8 1251.2,76.2 Q1252.8,73.4 1255.4,74 Z" fill="#c4c4c4"/></g>
<g id="i-fill"><rect x="1293" y="59.4" width="19.6" height="4.3" fill="#b9b9b9"/><path d="M1297,50.6 L1303.6,44.8 L1309.6,51.6 L1303,57.4 Z" fill="#f1f1f1" stroke="#b0b0b0" stroke-width="1.2" stroke-linejoin="round"/><path d="M1302.4,45.8 V48.8 M1309.4,51.4 Q1311.8,53.4 1311.4,56.6" stroke="#b0b0b0" stroke-width="1.2" fill="none"/></g>
<g id="i-outline"><rect x="1293" y="91.4" width="19.6" height="4.3" fill="#b9b9b9"/><path d="M1303,79 H1294.2 V88.6 H1299" stroke="#b0b0b0" stroke-width="1.3" fill="none"/><path d="M1301,88.2 L1302,84.4 L1309.2,77 a1.4,1.4 0 0 1 2,0 l.8,.8 a1.4,1.4 0 0 1 0,2 L1304.8,87.2 Z" fill="#f1f1f1" stroke="#b0b0b0" stroke-width="1.1" stroke-linejoin="round"/></g>
<g id="i-effects"><path d="M1293.4,120 L1299.6,110.6 H1310 L1312.4,116 L1306,125.4 H1295.6 Z" fill="#d6d6d6" stroke="#b0b0b0" stroke-width="1.2" stroke-linejoin="round"/><path d="M1293.4,120 L1299.6,110.6 H1310 L1303.8,120 Z" fill="#efefef" stroke="#b0b0b0" stroke-width="1.2" stroke-linejoin="round"/></g>
<g id="i-search" stroke="#444" stroke-width="1.3" fill="none" stroke-linecap="round"><circle cx="1385.6" cy="51.8" r="7"/><path d="M1380.6,57 L1374.2,63"/></g>
<g id="i-replfont"><text x="1378.8" y="86.4" font-family="Liberation Serif, serif" font-size="13" fill="#444">A</text><text x="1383.2" y="96" font-family="Liberation Serif, serif" font-size="14.5" fill="#444">A</text><path d="M1376.8,84.2 a4.6,4.6 0 0 0 -1.2,8.2 H1381 M1378.4,89.4 L1381.4,92.4 L1378.4,95.4" stroke="#2b88d8" stroke-width="1.4" fill="none" stroke-linecap="round" stroke-linejoin="round"/></g>
<path d="M1376.2,110 V124.6 L1379.8,121.4 L1382.4,127 L1384.8,125.8 L1382.4,120.4 L1387.6,120.2 Z" fill="#fff" stroke="#444" stroke-width="1.25" stroke-linejoin="round"/>
<g id="i-mic"><rect x="1608.6" y="44.9" width="14.6" height="26.2" rx="7.3" fill="#83beec" stroke="#1e73c8" stroke-width="1.5"/><path d="M1604.6,63.6 a11.3,11.3 0 0 0 22.6,0 M1615.9,75 V81.6" stroke="#4a4a4a" stroke-width="1.5" fill="none"/></g>
<g id="i-addins" stroke="#d8572a" fill="#fff"><rect x="1693.1" y="46.1" width="33.8" height="33.8" fill="#fdf6f2" stroke-width="1.5"/><rect x="1697.2" y="50.3" width="11" height="10.8" stroke-width="1.3"/><rect x="1712.4" y="50.3" width="11" height="10.8" stroke-width="1.3"/><rect x="1697.2" y="65.6" width="11" height="10.8" stroke-width="1.3"/><rect x="1712.4" y="65.6" width="11" height="10.8" stroke-width="1.3"/></g>
<g id="i-designer"><rect x="1801.8" y="49.9" width="34.2" height="26.2" fill="#f7f7f7" stroke="#6f6f6f" stroke-width="1.3"/><rect x="1803.5" y="51.6" width="30.8" height="22.8" fill="none" stroke="#c2c2c2" stroke-width="1"/><path d="M1812,53.6 H1834 M1825.6,53.6 V74" stroke="#7a7a7a" stroke-width="1.2"/>
<path d="M1806.6,43 H1815 L1810.4,52 H1814.6 L1799.6,67.6 L1804.6,56.6 H1800.2 Z" fill="#fff" stroke="#fff" stroke-width="3"/><path d="M1806.6,43 H1815 L1810.4,52 H1814.6 L1799.6,67.6 L1804.6,56.6 H1800.2 Z" fill="#f8c163" stroke="#e8892b" stroke-width="1.1" stroke-linejoin="round"/></g>
<circle cx="1436" cy="16" r="6.6" stroke="#333" stroke-width="1.3" fill="none"/><circle cx="1436" cy="16" r="3.7" fill="#333"/>
<g id="i-teams"><circle cx="1565.6" cy="11.2" r="2" stroke="#444" stroke-width="1.1" fill="#fff"/><circle cx="1560.8" cy="10.4" r="2.5" stroke="#444" stroke-width="1.1" fill="#fff"/><path d="M1562,14.4 H1568.6 V19.4 a3,3 0 0 1 -5,2.4" stroke="#444" stroke-width="1.1" fill="#fff"/><path d="M1557.4,14 H1565 V20 a4,4 0 0 1 -7.6,1.4" stroke="#444" stroke-width="1.1" fill="#fff"/><rect x="1554" y="12" width="8.6" height="8.6" rx="1.2" fill="#444"/><path d="M1556.2,14.4 H1560.4 M1558.3,14.4 V18.8" stroke="#fff" stroke-width="1.2"/></g>
<path d="M1763.2,9.6 H1777.8 V19.6 H1768.6 L1765.2,23 V19.6 H1763.2 Z" stroke="#333" stroke-width="1.25" fill="none" stroke-linejoin="round"/>
<g stroke="#fff" stroke-width="1.4" fill="none" stroke-linejoin="round" stroke-linecap="round"><path d="M1804.4,14.6 H1801 V22.6 H1811.6 V19.4"/><path d="M1804.6,19.2 Q1805.4,14.4 1810,14.2 V11.2 L1814,15.4 L1810,19.4 V16.8 Q1806.6,16.6 1804.6,19.2 Z"/></g>
<path d="M16.3,186.3 L20.3,183.4 V195.1" stroke="#c8421f" stroke-width="1.7" fill="none" stroke-linejoin="miter"/>
<path d="M270.4,173.4 L275.6,166 L280.8,173.4 Z" fill="#717171" stroke="#717171" stroke-width="1" stroke-linejoin="round"/><path d="M270.4,915.6 L275.6,923 L280.8,915.6 Z" fill="#717171" stroke="#717171" stroke-width="1" stroke-linejoin="round"/>
</svg>
<!-- labels -->
<div id="labels">
<span class="t " style="left:12.4px;top:8.6px;font-size:17px;line-height:17px;color:#343332;letter-spacing:-0.19px">Fichier</span>
<span class="t " style="left:82.4px;top:8.6px;font-size:17px;line-height:17px;color:#242424;letter-spacing:-0.75px;font-weight:700">Accueil</span>
<span class="t " style="left:159.4px;top:8.6px;font-size:17px;line-height:17px;color:#343332;letter-spacing:0.22px">Insertion</span>
<span class="t " style="left:249.4px;top:8.6px;font-size:17px;line-height:17px;color:#343332;letter-spacing:-0.46px">Dessin</span>
<span class="t " style="left:321.4px;top:8.6px;font-size:17px;line-height:17px;color:#343332;letter-spacing:0.22px">Conception</span>
<span class="t " style="left:432.4px;top:8.6px;font-size:17px;line-height:17px;color:#343332;letter-spacing:-0.03px">Transitions</span>
<span class="t " style="left:536.9px;top:8.6px;font-size:17px;line-height:17px;color:#343332;letter-spacing:0.21px">Animations</span>
<span class="t " style="left:645.4px;top:8.6px;font-size:17px;line-height:17px;color:#343332;letter-spacing:0.12px">Diaporama</span>
<span class="t " style="left:752.4px;top:8.6px;font-size:17px;line-height:17px;color:#343332;letter-spacing:-0.04px">Enregistrer</span>
<span class="t " style="left:858.9px;top:8.6px;font-size:17px;line-height:17px;color:#343332;letter-spacing:-0.44px">Révision</span>
<span class="t " style="left:945.4px;top:8.6px;font-size:17px;line-height:17px;color:#343332;letter-spacing:0.12px">Affichage</span>
<span class="t " style="left:1040.4px;top:8.6px;font-size:17px;line-height:17px;color:#343332;letter-spacing:0.12px">Développeur</span>
<span class="t " style="left:1161.4px;top:8.6px;font-size:17px;line-height:17px;color:#343332;letter-spacing:0.04px">Aide</span>
<span class="t " style="left:1447.4px;top:7.6px;font-size:17px;line-height:17px;color:#343332;letter-spacing:0.01px">Enregistrer</span>
<span class="t " style="left:1573.4px;top:7.6px;font-size:17px;line-height:17px;color:#343332;letter-spacing:-0.18px">Présenter dans Teams</span>
<span class="t " style="left:1819.8px;top:7.0px;font-size:17px;line-height:17px;color:#ffffff;letter-spacing:0.30px;font-weight:700">Partager</span>
<span class="t " style="left:29.4px;top:90.7px;font-size:14.5px;line-height:14.5px;color:#343332;letter-spacing:0.35px">Coller</span>
<span class="t " style="left:173.9px;top:89.0px;font-size:14.5px;line-height:14.5px;color:#343332;letter-spacing:0.36px">Nouvelle</span>
<span class="t " style="left:159.9px;top:109.0px;font-size:14.5px;line-height:14.5px;color:#343332;letter-spacing:0.45px">diapositive</span>
<span class="t " style="left:254.1px;top:89.0px;font-size:14.5px;line-height:14.5px;color:#343332;letter-spacing:0.03px">Réutiliser des</span>
<span class="t " style="left:259.0px;top:109.0px;font-size:14.5px;line-height:14.5px;color:#343332;letter-spacing:0.29px">diapositives</span>
<span class="t " style="left:1093.7px;top:89.0px;font-size:14.5px;line-height:14.5px;color:#343332;letter-spacing:-0.09px">Formes</span>
<span class="t " style="left:1148.8px;top:89.0px;font-size:14.5px;line-height:14.5px;color:#343332;letter-spacing:0.10px">Organiser</span>
<span class="t " style="left:1233.0px;top:89.0px;font-size:14.5px;line-height:14.5px;color:#b1afad;letter-spacing:-0.20px">Styles</span>
<span class="t " style="left:1219.8px;top:109.0px;font-size:14.5px;line-height:14.5px;color:#b1afad;letter-spacing:0.28px">rapides</span>
<span class="t " style="left:1398.0px;top:47.9px;font-size:14.5px;line-height:14.5px;color:#343332;letter-spacing:0.07px">Rechercher et remplacer</span>
<span class="t " style="left:1398.0px;top:80.0px;font-size:14.5px;line-height:14.5px;color:#343332;letter-spacing:0.12px">Remplacer les polices</span>
<span class="t " style="left:1398.0px;top:111.7px;font-size:14.5px;line-height:14.5px;color:#343332;letter-spacing:0.17px">Sélectionner</span>
<span class="t " style="left:1596.0px;top:90.8px;font-size:14.5px;line-height:14.5px;color:#343332;letter-spacing:0.42px">Dicter</span>
<span class="t " style="left:1663.7px;top:89.0px;font-size:14.5px;line-height:14.5px;color:#343332;letter-spacing:0.29px">Compléments</span>
<span class="t " style="left:1780.4px;top:89.0px;font-size:14.5px;line-height:14.5px;color:#343332;letter-spacing:0.20px">Concepteur</span>
<span class="t " style="left:26.8px;top:140.8px;font-size:12.5px;line-height:12.5px;color:#343332;letter-spacing:0.22px">Presse-papiers</span>
<span class="t " style="left:242.0px;top:141.5px;font-size:12.5px;line-height:12.5px;color:#343332;letter-spacing:0.23px">Diapositives</span>
<span class="t " style="left:572.9px;top:141.0px;font-size:12.5px;line-height:12.5px;color:#343332;letter-spacing:-0.01px">Police</span>
<span class="t " style="left:892.8px;top:141.0px;font-size:12.5px;line-height:12.5px;color:#343332;letter-spacing:0.30px">Paragraphe</span>
<span class="t " style="left:1189.8px;top:141.0px;font-size:12.5px;line-height:12.5px;color:#343332;letter-spacing:0.01px">Dessin</span>
<span class="t " style="left:1448.2px;top:141.5px;font-size:12.5px;line-height:12.5px;color:#343332;letter-spacing:0.22px">Édition</span>
<span class="t " style="left:1602.2px;top:141.5px;font-size:12.5px;line-height:12.5px;color:#343332;letter-spacing:0.44px">Voix</span>
<span class="t " style="left:1669.9px;top:141.8px;font-size:12.5px;line-height:12.5px;color:#343332;letter-spacing:0.28px">Compléments</span>
<span class="t " style="left:14.2px;top:317.6px;font-size:17px;line-height:17px;color:#444444;letter-spacing:0.00px">2</span>
<span class="t " style="left:14.2px;top:454.6px;font-size:17px;line-height:17px;color:#444444;letter-spacing:0.00px">3</span>
<span class="t " style="left:14.2px;top:591.6px;font-size:17px;line-height:17px;color:#444444;letter-spacing:0.00px">4</span>
<span class="t " style="left:14.2px;top:728.6px;font-size:17px;line-height:17px;color:#444444;letter-spacing:0.00px">5</span>
<span class="t " style="left:14.2px;top:865.6px;font-size:17px;line-height:17px;color:#444444;letter-spacing:0.00px">6</span>
<span class="t sf" style="left:1244.2px;top:547.9px;font-size:55px;line-height:55px;color:#e8e4da;letter-spacing:-0.60px">Zotrim Uka</span>
<span class="t sf" style="left:1244.7px;top:629.9px;font-size:30.5px;line-height:30.5px;color:#f3f1eb;letter-spacing:-0.79px">LI 3</span>
</div>
</body></html>
